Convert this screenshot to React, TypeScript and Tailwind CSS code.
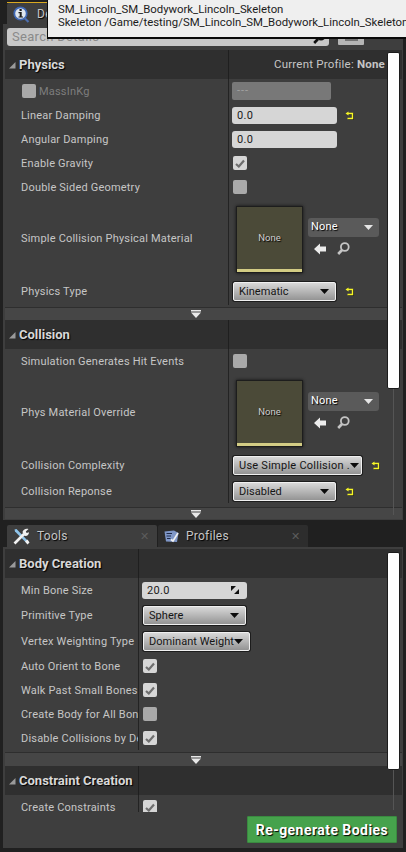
import type { ReactNode } from "react";

const font = "font-['Roboto',sans-serif]";

function ResetArrow() {
  return (
    <svg width="9" height="9" viewBox="0 0 9 9" className="shrink-0">
      <path d="M3 2.5 H7.5 V7.5 H2.5" fill="none" stroke="#1a1a1a" strokeWidth="1.5" transform="translate(0.6 0.6)" />
      <path d="M3 2.5 H7.5 V7.5 H2.5" fill="none" stroke="#f6f626" strokeWidth="1.4" />
      <path d="M0.5 2.5 L3.5 0.5 V4.5 Z" fill="#f6f626" />
    </svg>
  );
}

function Checkbox({ checked }: { checked?: boolean }) {
  return (
    <div className={`ml-px w-3.5 h-3.5 rounded-[2px] flex items-center justify-center ${checked ? "bg-[#d6d6d6]" : "bg-[#a9a9a9]"}`}>
      {checked && (
        <svg width="10" height="9" viewBox="0 0 10 9">
          <path d="M1 5 L3.8 7.5 L9 1.5" fill="none" stroke="#6e6e6e" strokeWidth="2.2" />
        </svg>
      )}
    </div>
  );
}

function Caret() {
  return (
    <svg width="9" height="5" viewBox="0 0 9 5" className="shrink-0">
      <path d="M0 0 H9 L4.5 5 Z" fill="#0c0c0c" />
    </svg>
  );
}

function Combo({ label, w, tracking = "tracking-[0.05px]" }: { label: string; w: string; tracking?: string }) {
  return (
    <div className={`${w} h-[19px] ml-px mr-px shrink-0 flex items-center justify-between pl-[5px] pr-[6px] rounded-[2px] border border-[#f0f0f0] bg-gradient-to-b from-[#d8d8d8] via-[#b6b6b6] to-[#949494] text-[#151515] text-[11px] ${tracking} whitespace-nowrap shadow-[0_0_0_1px_#1c1c1c]`}>
      <span className="pt-[2px]">{label}</span>
      <Caret />
    </div>
  );
}

function NumberBox({ value, w = "w-[105px]", children }: { value: string; w?: string; children?: ReactNode }) {
  return (
    <div className={`${w} h-[17px] shrink-0 flex items-center justify-between pl-[5px] pr-2 rounded-[3px] bg-[#d6d6d6] text-[#1a1a1a] text-[11px] tracking-[0.3px]`}>
      <span className="pt-[2px]">{value}</span>
      {children}
    </div>
  );
}

function Row({ label, h, dim, children, dividerW }: { label: ReactNode; h: string; dim?: boolean; children?: ReactNode; dividerW: string }) {
  return (
    <div className={`flex shrink-0 ${h}`}>
      <div className={`${dividerW} shrink-0 flex items-center pl-4 pt-[2px] overflow-hidden whitespace-nowrap border-r border-[#232323] text-[11px] tracking-[0.2px] ${dim ? "text-[#7d7d7d]" : "text-[#c6c6c6]"}`}>
        {label}
      </div>
      <div className="flex-1 flex items-center gap-2 pl-[3px]">{children}</div>
    </div>
  );
}

function SectionHeader({ title, dividerW, children }: { title: string; dividerW: string; children?: ReactNode }) {
  return (
    <div className="flex shrink-0 h-[29px] bg-[#2f2f2f]">
      <div className={`${dividerW} shrink-0 flex items-center gap-[3px] pl-[3px] border-r border-[#1f1f1f]`}>
        <svg width="8" height="8" viewBox="0 0 8 8" className="shrink-0">
          <path d="M7.5 1 V7.5 H1 Z" fill="#9a9a9a" />
        </svg>
        <span className="text-[13px] font-bold text-[#d8d8d8] [text-shadow:1px_1px_1px_#000]">{title}</span>
      </div>
      <div className="flex-1 flex items-center justify-end pr-[17px]">{children}</div>
    </div>
  );
}

function ExpandBar({ h }: { h: string }) {
  return (
    <div className={`${h} shrink-0 flex items-center justify-center bg-[#464646] border-t border-[#2e2e2e] pr-[16px]`}>
      <svg width="10" height="8" viewBox="0 0 10 8">
        <rect x="0" y="0" width="10" height="1.5" fill="#e8e8e8" />
        <path d="M0 2.5 H10 L5 8 Z" fill="#e8e8e8" />
      </svg>
    </div>
  );
}

function MaterialPicker() {
  return (
    <div className="flex items-center gap-[5px] pl-[4px]">
      <div className="w-[67px] h-[67px] mt-[2px] flex flex-col bg-[#4b4a38] border border-[#1d1d1d] shadow-[0_0_3px_#111]">
        <div className="flex-1 flex items-center justify-center pt-[2px] text-[9.5px] text-[#cfcfcf] [text-shadow:1px_1px_1px_#000]">None</div>
        <div className="h-[3px] bg-[#d3cc84]" />
      </div>
      <div className="flex flex-col gap-[5px] -mt-[3px]">
        <div className="w-[71px] h-[19px] flex items-center justify-between pl-[3px] pr-[6px] rounded-[3px] bg-[#5a5a5a] text-[11px] tracking-[0.2px] text-white [text-shadow:1px_1px_1px_#000]">
          <span>None</span>
          <svg width="9" height="5" viewBox="0 0 9 5"><path d="M0 0 H9 L4.5 5 Z" fill="#e6e6e6" /></svg>
        </div>
        <div className="flex items-center gap-[11px] pl-[6px]">
          <svg width="12" height="12" viewBox="0 0 12 12">
            <path d="M0 6 L6 0.5 V3.5 H12 V8.5 H6 V11.5 Z" fill="#ececec" />
          </svg>
          <svg width="13" height="13" viewBox="0 0 13 13">
            <circle cx="7.8" cy="5" r="3.9" fill="none" stroke="#c4c4c4" strokeWidth="1.8" />
            <path d="M5 8 L1.2 12" stroke="#c4c4c4" strokeWidth="2.6" />
          </svg>
        </div>
      </div>
    </div>
  );
}

function DetailsTabIcon() {
  return (
    <svg width="17" height="17" viewBox="0 0 17 17" className="shrink-0">
      <circle cx="7.5" cy="7.5" r="6.2" fill="#dfe6ee" stroke="#3f68b5" strokeWidth="1.8" />
      <path d="M11.5 12 L15.5 16" stroke="#4d6fb0" strokeWidth="2.2" />
      <rect x="6.5" y="3" width="2.2" height="2" fill="#1c1c1c" />
      <path d="M5.5 6 H8.7 V10.5 H10 V11.6 H5.5 V10.5 H6.7 V7.2 H5.5 Z" fill="#1c1c1c" />
    </svg>
  );
}

function WrenchIcon() {
  return (
    <svg width="17" height="17" viewBox="0 0 17 17" className="shrink-0">
      <path d="M1.5 1.5 L3.5 1 L15.5 13.5 L14 15.5 L2 3.5 Z" fill="#8fc4ea" />
      <path d="M1.5 15.5 L11 6" stroke="#f2f2f2" strokeWidth="2.6" />
      <path d="M9.5 4 C10 1.5 13 0 15.5 1 L12.8 3.6 L13.6 5 L16 4.2 C16 7 13.4 8.8 11 7.5 Z" fill="#f2f2f2" />
      <path d="M12 13.5 L14.5 11.5 L16.5 14.5 L14.5 16.5 Z" fill="#f2f2f2" />
    </svg>
  );
}

function ProfilesIcon() {
  return (
    <svg width="15" height="13" viewBox="0 0 15 13" className="shrink-0">
      <path d="M0.5 1.5 L10 0.5 L14.5 3 L13 12 L2 11.5 Z" fill="#7f97c8" />
      <path d="M2.5 3.5 H8 M2.5 6 H7 M3 8.5 H6.5" stroke="#1f2b4a" strokeWidth="1" />
      <path d="M7 9.5 L9 11 L14 3" fill="none" stroke="#f2f2f2" strokeWidth="1.6" />
    </svg>
  );
}

function Tab({ icon, label, active, w, withClose = true }: { icon: ReactNode; label: string; active?: boolean; w: string; withClose?: boolean }) {
  return (
    <div className={`${w} h-[22px] flex items-center gap-[7px] pl-[6px] pr-2 rounded-t-[2px] ${active ? "bg-[#3e3e3e]" : "bg-[#2d2d2d]"}`}>
      {icon}
      <span className="flex-1 text-xs tracking-[0.25px] text-[#c6c6c6] [text-shadow:1px_1px_1px_#000]">{label}</span>
      {withClose && <span className="text-[11px] leading-none text-[#5c5c5c]">✕</span>}
    </div>
  );
}

function Scrollbar({ className }: { className: string }) {
  return <div className={`absolute left-[384px] w-[13px] rounded-[2px] bg-white border border-[#1c1c1c] ${className}`} />;
}

export default function App() {
  const d = "w-[224px]";
  const t = "w-[134px]";
  return (
    <div className={`relative w-[406px] h-[852px] overflow-hidden bg-[#202020] ${font}`}>
      {/* asset tooltip */}
      <div className="absolute left-[47px] top-0 z-10 w-[359px] h-[39px] pl-[10px] pt-[3px] bg-[#efefef] border-b-[2px] border-l-[1px] border-[#0a0a0a] text-[11.35px] leading-[13px] text-[#1c1c1c] whitespace-nowrap overflow-hidden">
        <div>SM_Lincoln_SM_Bodywork_Lincoln_Skeleton</div>
        <div>Skeleton /Game/testing/SM_Lincoln_SM_Bodywork_Lincoln_Skeleton</div>
      </div>

      {/* details tab */}
      <div className="flex pl-[7px] pt-[2px] h-6">
        <div className="w-[60px] border-t border-[#d9a920]">
          <Tab icon={<DetailsTabIcon />} label="Details" active w="w-full" withClose={false} />
        </div>
      </div>

      {/* details panel */}
      <div className="relative mx-[3px] h-[496px] bg-[#3e3e3e] flex flex-col">
        <div className="h-[26px] shrink-0 flex items-center gap-[9px] pl-[4px] pr-[6px]">
          <div className="w-[322px] h-[18px] flex items-center justify-between pl-[5px] pr-[3px] rounded-[3px] bg-[#c9c9c9] text-[13px] tracking-[0.3px] text-[#8a8a8a]">
            <span>Search Details</span>
            <svg width="13" height="13" viewBox="0 0 13 13">
              <circle cx="8" cy="5" r="3.6" fill="none" stroke="#111" strokeWidth="2" />
              <path d="M5 8 L1.2 12" stroke="#111" strokeWidth="2.6" />
            </svg>
          </div>
          <div className="w-[26px] h-[16px] flex items-center justify-center bg-[#b5b5b5] rounded-[1px]">
            <svg width="13" height="7" viewBox="0 0 13 7">
              <path d="M0 1 H13 M0 3.5 H13 M0 6 H13" stroke="#5d5d5d" strokeWidth="1.4" />
            </svg>
          </div>
          <div className="w-[15px] h-[7px] -mt-[14px] rounded-b-full border-b-2 border-[#7f93b8]" />
        </div>

        <div className="flex-1 flex flex-col ml-[2px] mr-[1px]">
          <SectionHeader title="Physics" dividerW={d}>
            <span className="text-[11.5px] tracking-[0.2px] text-[#c6c6c6]">
              Current Profile: <span className="font-bold">None</span>
            </span>
          </SectionHeader>
          <Row label={<span className="flex items-center gap-[3px] pl-[1px]"><span className="w-3.5 h-3.5 rounded-[2px] bg-[#a9a9a9] -mt-[2px]" />MassInKg</span>} h="h-6" dim dividerW={d}>
            <div className="w-[99px] h-[18px] flex items-center pl-[5px] rounded-[2px] bg-[#787878] text-[11px] tracking-[1px] text-[#a3a3a3]">---</div>
          </Row>
          <Row label="Linear Damping" h="h-6" dividerW={d}><NumberBox value="0.0" /><ResetArrow /></Row>
          <Row label="Angular Damping" h="h-6" dividerW={d}><NumberBox value="0.0" /></Row>
          <Row label="Enable Gravity" h="h-6" dividerW={d}><Checkbox checked /></Row>
          <Row label="Double Sided Geometry" h="h-6" dividerW={d}><Checkbox /></Row>
          <Row label="Simple Collision Physical Material" h="h-[78px]" dividerW={d}><MaterialPicker /></Row>
          <Row label="Physics Type" h="h-7" dividerW={d}><Combo label="Kinematic" w="w-[103px]" /><ResetArrow /></Row>
          <ExpandBar h="h-[13px] mt-[2px]" />
          <SectionHeader title="Collision" dividerW={d} />
          <Row label="Simulation Generates Hit Events" h="h-6" dividerW={d}><Checkbox /></Row>
          <Row label="Phys Material Override" h="h-[78px]" dividerW={d}><MaterialPicker /></Row>
          <Row label="Collision Complexity" h="h-7" dividerW={d}><Combo label="Use Simple Collision ." w="w-[129px]" tracking="tracking-[0.25px]" /><ResetArrow /></Row>
          <Row label="Collision Reponse" h="h-6" dividerW={d}><Combo label="Disabled" w="w-[103px]" /><ResetArrow /></Row>
          <ExpandBar h="h-[12px] mt-[4px]" />
        </div>
        <Scrollbar className="top-[28px] h-[337px]" />
        <div className="absolute left-[390px] top-[365px] w-px h-[126px] bg-[#555555]" />
      </div>

      {/* tools tabs */}
      <div className="flex gap-px pl-[7px] mt-[5px] h-[22px]">
        <Tab icon={<WrenchIcon />} label="Tools" active w="w-[150px]" />
        <Tab icon={<ProfilesIcon />} label="Profiles" w="w-[150px]" />
      </div>

      {/* tools panel */}
      <div className="relative mx-[3px] h-[301px] bg-[#3e3e3e] flex flex-col">
        <div className="h-[265px] shrink-0 flex flex-col ml-[2px] mr-[1px] pt-[2px] overflow-hidden">
          <SectionHeader title="Body Creation" dividerW={t} />
          <Row label="Min Bone Size" h="h-6" dividerW={t}>
            <NumberBox value="20.0" w="w-[105px]">
              <svg width="8" height="8" viewBox="0 0 8 8">
                <path d="M0 0 H5 L0 5 Z M8 8 H3 L8 3 Z" fill="#111" />
              </svg>
            </NumberBox>
          </Row>
          <Row label="Primitive Type" h="h-[26px]" dividerW={t}><Combo label="Sphere" w="w-[103px]" /></Row>
          <Row label="Vertex Weighting Type" h="h-[26px]" dividerW={t}><Combo label="Dominant Weight" w="w-[107px]" /></Row>
          <Row label="Auto Orient to Bone" h="h-6" dividerW={t}><Checkbox checked /></Row>
          <Row label="Walk Past Small Bones" h="h-6" dividerW={t}><Checkbox checked /></Row>
          <Row label="Create Body for All Bones" h="h-6" dividerW={t}><Checkbox /></Row>
          <Row label="Disable Collisions by Default" h="h-6" dividerW={t}><Checkbox checked /></Row>
          <ExpandBar h="h-[14px] mt-[2px]" />
          <SectionHeader title="Constraint Creation" dividerW={t} />
          <Row label="Create Constraints" h="h-6" dividerW={t}><Checkbox checked /></Row>
        </div>
        <div className="flex justify-end pr-[6px] pt-[4px]">
          <div className="w-[150px] h-[27px] flex items-center justify-center rounded-[1px] bg-[#46a24c] border border-[#3a8a40] text-sm font-bold tracking-[0.45px] text-white [text-shadow:1px_1px_1px_#000]">
            Re-generate Bodies
          </div>
        </div>
        <Scrollbar className="top-[5px] h-[218px]" />
        <div className="absolute left-[390px] top-[223px] w-px h-[40px] bg-[#555555]" />
      </div>
    </div>
  );
}
